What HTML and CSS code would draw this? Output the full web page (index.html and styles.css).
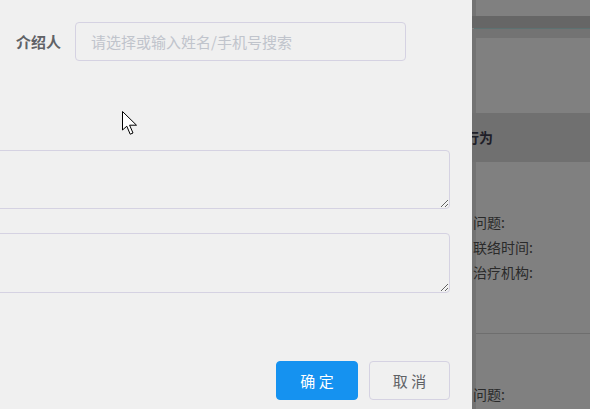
FILE: index.html
```html
<!DOCTYPE html>
<html lang="zh">
<head>
<meta charset="utf-8">
<link rel="stylesheet" href="styles.css">
</head>
<body>
<div class="page">
  <div class="under"></div>
  <div class="main">
    <div class="row r-top"><span class="edge"></span><span class="fill"></span></div>
    <div class="row r-band1"></div>
    <div class="row r-line"></div>
    <div class="row r-band2"></div>
    <div class="row r-tall"><span class="edge"></span><span class="fill"></span></div>
    <div class="row r-head"><span class="head-text">行为</span></div>
    <div class="row r-body">
      <span class="edge"></span>
      <div class="fill info">
        <div class="card">
          <div class="line">问题:</div>
          <div class="line">联络时间:</div>
          <div class="line">治疗机构:</div>
        </div>
        <div class="card card2">
          <div class="line">问题:</div>
        </div>
      </div>
    </div>
  </div>
</div>

<div class="drawer">
  <div class="form">
    <div class="item">
      <label class="label">介绍人</label>
      <input class="input" type="text" placeholder="请选择或输入姓名/手机号搜索">
    </div>
    <div class="area-row a1"><textarea class="area"></textarea></div>
    <div class="area-row a2"><textarea class="area area2"></textarea></div>
    <div class="actions">
      <button class="btn primary">确 定</button>
      <button class="btn">取 消</button>
    </div>
  </div>
</div>

<svg class="cursor" width="17" height="26" viewBox="0 0 17 26">
  <path d="M0.5 0.5 L0.5 19 L4.8 15.2 L8.2 23.2 L11 22 L7.6 14.2 L14.5 14.2 Z" fill="#fff" stroke="#000" stroke-width="1"/>
</svg>
</body>
</html>
```

FILE: styles.css
```css
* { box-sizing: border-box; }
html, body {
  margin: 0;
  padding: 0;
}
body {
  width: 590px;
  height: 409px;
  overflow: hidden;
  position: relative;
  font-family: "Noto Sans CJK SC", "Noto Sans", sans-serif;
  background: #808080;
}

/* dimmed page behind the drawer */
.page {
  display: flex;
  height: 409px;
}
.under {
  width: 472px;
  flex: none;
  background: #808080;
}
.main {
  flex: 1;
  display: flex;
  flex-direction: column;
  min-width: 0;
}
.row { display: flex; flex: none; }
.edge {
  width: 4px;
  flex: none;
  background: #737373;
}
.fill {
  flex: 1;
  background: #808080;
}
.r-top { height: 16px; }
.r-band1 { height: 12px; background: #666666; }
.r-line { height: 1px; background: #5d7272; margin-left: 2px; }
.r-band2 { height: 9px; background: #737373; }
.r-tall { height: 75px; }
.r-head {
  height: 49px;
  background: #707070;
  align-items: center;
}
.head-text {
  margin-left: -7px;
  font-size: 14px;
  font-weight: bold;
  color: #1e1e28;
  padding-bottom: 2px;
}
.r-body {
  flex: 1;
  min-height: 0;
  overflow: hidden;
}
.info {
  display: flex;
  flex-direction: column;
}
.card {
  flex: none;
  height: 172px;
  padding-top: 48px;
  border-bottom: 1px solid #6e6e6e;
}
.card2 {
  border-bottom: none;
  padding-top: 48px;
}
.line {
  font-size: 14px;
  line-height: 25px;
  height: 25px;
  color: #2a2a2a;
  white-space: nowrap;
  margin-left: -3px;
}

/* drawer */
.drawer {
  position: absolute;
  left: 0;
  top: 0;
  width: 472px;
  height: 409px;
  background: #f0f0f0;
  overflow: hidden;
}
.form {
  padding: 22px 22px 0 0;
}
.item {
  display: flex;
  align-items: center;
  padding-left: 16px;
  gap: 14px;
}
.label {
  font-size: 15px;
  font-weight: bold;
  color: #606266;
  line-height: 20px;
}
.input {
  width: 331px;
  height: 39px;
  border: 1px solid #d5d2e2;
  border-radius: 4px;
  background: #f0f0f0;
  padding: 0 15px;
  font-family: inherit;
  font-size: 15px;
  color: #606266;
  outline: none;
}
.input::placeholder { color: #c0c4cc; }
.area-row {
  margin-left: -40px;
}
.a1 { margin-top: 89px; }
.a2 { margin-top: 24px; }
.area {
  display: block;
  width: 100%;
  height: 59px;
  border: 1px solid #d5d2e2;
  border-radius: 4px;
  background: #f0f0f0;
  resize: vertical;
  outline: none;
  font-family: inherit;
}
.area2 { height: 60px; }
.actions {
  margin-top: 68px;
  display: flex;
  justify-content: flex-end;
  gap: 11px;
}
.btn {
  width: 81px;
  height: 39px;
  border: 1px solid #d5d2e2;
  border-radius: 4px;
  background: #f0f0f0;
  color: #606266;
  font-family: inherit;
  font-size: 15px;
  padding: 0;
}
.btn.primary {
  width: 82px;
  background: #1592f0;
  border-color: #1592f0;
  color: #ffffff;
}

.cursor {
  position: absolute;
  left: 122px;
  top: 111px;
}
```
